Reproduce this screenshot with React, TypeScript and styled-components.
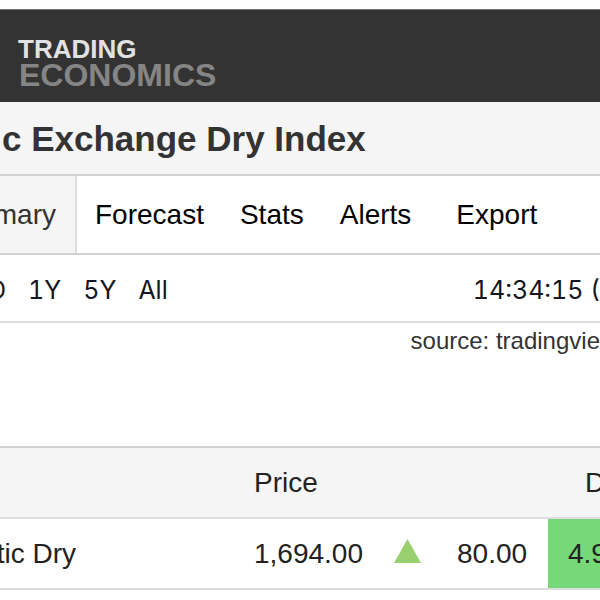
import React from "react";
import styled, { createGlobalStyle } from "styled-components";

const GlobalStyle = createGlobalStyle`
  *, *::before, *::after { box-sizing: border-box; }
  body {
    margin: 0;
    background: #fff;
    color: #222;
    font-family: "Liberation Sans", Arial, sans-serif;
    overflow-x: hidden;
  }
`;

const Page = styled.div`
  padding-top: 9px;
  overflow: hidden;
`;

const Header = styled.header`
  height: 93px;
  padding: 26px 18px 0;
  background: #333;
  border-top: 1px solid #777;
`;

const Logo = styled.a`
  display: inline-flex;
  flex-direction: column;
  color: #e2e2e2;
  font-weight: 700;
  text-decoration: none;
`;

const LogoTop = styled.span`
  font-size: 26px;
  line-height: 26px;
`;

const LogoBottom = styled.span`
  padding-left: 1px;
  color: #858585;
  font-size: 32px;
  line-height: 26px;
`;

const Title = styled.h1`
  margin: 0;
  padding: 1px 2px 0;
  background: #f5f5f5;
  color: #333;
  font-size: 35px;
  line-height: 71px;
  white-space: nowrap;
`;

const Tabs = styled.nav`
  display: flex;
  height: 81px;
  border-top: 2px solid #d2d2d2;
  border-bottom: 2px solid #d2d2d2;
`;

const Tab = styled.a<{ $active?: boolean; $wide?: boolean }>`
  display: flex;
  justify-content: flex-end;
  flex: none;
  padding: ${(p) => (p.$active ? "0 19px 0 0" : p.$wide ? "0 18px 0 27px" : "0 18px")};
  width: ${(p) => (p.$active ? "77px" : "auto")};
  overflow: hidden;
  background: ${(p) => (p.$active ? "#f5f5f5" : "#fff")};
  border-right: ${(p) => (p.$active ? "2px solid #ddd" : "0")};
  color: ${(p) => (p.$active ? "#333" : "#000")};
  font-size: 28px;
  line-height: 77px;
  text-decoration: none;
`;

const RangeBar = styled.div`
  display: flex;
  justify-content: space-between;
  height: 68px;
  border-bottom: 2px solid #dcdcdc;
  color: #131722;
  font-family: Inter, "Liberation Sans", sans-serif;
  font-size: 25px;
  font-variant-numeric: tabular-nums;
  line-height: 71px;
  white-space: nowrap;
`;

const Ranges = styled.div`
  display: flex;
  gap: 22px;
`;

const RangeButton = styled.button<{ $clipped?: boolean }>`
  display: flex;
  justify-content: flex-end;
  width: ${(p) => (p.$clipped ? "6px" : "auto")};
  overflow: hidden;
  padding: 0;
  border: 0;
  background: none;
  color: inherit;
  font: inherit;
  font-variant-numeric: tabular-nums;
`;

const Source = styled.p`
  display: flex;
  justify-content: flex-end;
  margin: 0 0 87px;
  color: #333;
  font-size: 24px;
  line-height: 36px;
  white-space: nowrap;
`;

const Quotes = styled.table`
  width: 100%;
  border-collapse: collapse;
  table-layout: fixed;
  border-top: 2px solid #d2d2d2;
  font-size: 28px;
  line-height: 69px;
  white-space: nowrap;
`;

const HeadRow = styled.tr`
  height: 71px;
  background: #f5f5f6;
  border-bottom: 2px solid #dedee0;
`;

const BodyRow = styled.tr`
  height: 71px;
  border-bottom: 2px solid #dedee0;
`;

const HeadCell = styled.th<{ $indent?: number }>`
  padding: 0 0 0 ${(p) => p.$indent ?? 0}px;
  font-weight: 400;
  text-align: left;
  overflow: hidden;
`;

const Cell = styled.td<{ $gain?: boolean }>`
  padding: ${(p) => (p.$gain ? "0 0 0 20px" : "0")};
  background: ${(p) => (p.$gain ? "#77d879" : "transparent")};
  overflow: hidden;
`;

const Name = styled.div`
  display: flex;
  justify-content: flex-end;
  width: 76px;
  overflow: hidden;
`;

const Arrow = styled.svg`
  display: block;
  width: 27px;
  height: 30px;
`;

export default function App() {
  return (
    <Page>
      <GlobalStyle />
      <Header>
        <Logo href="#" aria-label="Trading Economics">
          <LogoTop>TRADING</LogoTop>
          <LogoBottom>ECONOMICS</LogoBottom>
        </Logo>
      </Header>
      <Title>c Exchange Dry Index</Title>
      <Tabs>
        <Tab href="#" $active>mary</Tab>
        <Tab href="#">Forecast</Tab>
        <Tab href="#">Stats</Tab>
        <Tab href="#">Alerts</Tab>
        <Tab href="#" $wide>Export</Tab>
      </Tabs>
      <RangeBar>
        <Ranges>
          <RangeButton $clipped>D</RangeButton>
          <RangeButton>1Y</RangeButton>
          <RangeButton>5Y</RangeButton>
          <RangeButton>All</RangeButton>
        </Ranges>
        <time>14:34:15 (</time>
      </RangeBar>
      <Source>source: tradingvie</Source>
      <Quotes>
        <colgroup>
          <col width="254" />
          <col width="140" />
          <col width="63" />
          <col />
          <col width="52" />
        </colgroup>
        <thead>
          <HeadRow>
            <HeadCell />
            <HeadCell>Price</HeadCell>
            <HeadCell />
            <HeadCell />
            <HeadCell $indent={37}>D</HeadCell>
          </HeadRow>
        </thead>
        <tbody>
          <BodyRow>
            <Cell><Name>tic Dry</Name></Cell>
            <Cell>1,694.00</Cell>
            <Cell>
              <Arrow viewBox="0 0 27 30" aria-label="Up">
                <path d="M13.5 0L27 24H0Z" fill="#98cf6f" />
              </Arrow>
            </Cell>
            <Cell>80.00</Cell>
            <Cell $gain>4.9</Cell>
          </BodyRow>
        </tbody>
      </Quotes>
    </Page>
  );
}
